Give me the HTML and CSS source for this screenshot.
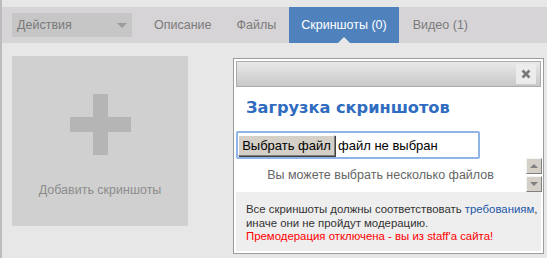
FILE: index.html
```html
<!DOCTYPE html>
<html lang="ru">
<head>
  <meta charset="UTF-8">
  <title>Скриншоты</title>
  <link rel="stylesheet" href="styles.css">
</head>
<body>
  <div id="page">
    <div class="tabbar">
      <div class="actions">Действия <span class="caret"></span></div>
      <ul class="tabs">
        <li class="tab">Описание</li>
        <li class="tab">Файлы</li>
        <li class="tab active">Скриншоты (0)</li>
        <li class="tab">Видео (1)</li>
      </ul>
    </div>

    <div class="content">
      <div class="add-card">
        <div class="plus"></div>
        <span class="add-label">Добавить скриншоты</span>
      </div>
    </div>

    <div class="dialog">
      <div class="dialog-bar">
        <span class="close">
          <svg width="10" height="10" viewBox="0 0 10 10"><path d="M1.5 1.5 L8.5 8.5 M8.5 1.5 L1.5 8.5" stroke="#7a7a7a" stroke-width="2.6"/></svg>
        </span>
      </div>
      <div class="dialog-body">
        <h2 class="dialog-title">Загрузка скриншотов</h2>
        <div class="file-field">
          <button class="file-btn">Выбрать файл</button>
          <span class="file-name">файл не выбран</span>
        </div>
        <p class="hint">Вы можете выбрать несколько файлов</p>
        <div class="notice">
          Все скриншоты должны соответствовать <a href="#">требованиям</a>,<br>
          иначе они не пройдут модерацию.<br>
          <span class="warn">Премодерация отключена - вы из staff'a сайта!</span>
        </div>
      </div>
      <div class="scroll-btns">
        <span class="sbtn up"></span>
        <span class="sbtn down"></span>
      </div>
    </div>
  </div>
</body>
</html>
```

FILE: styles.css
```css
html, body, div, ul, li, p, h2 {
  margin: 0;
  padding: 0;
}

body {
  background-color: #e7e7e7;
  font-family: "Liberation Sans", Arial, sans-serif;
  color: #444;
  height: 258px;
  overflow: hidden;
}

#page {
  position: relative;
  height: 258px;
  border-left: 2px solid #bcbcbc;
  padding-top: 7px;
  box-sizing: border-box;
}

/* top bar */

.tabbar {
  display: flex;
  align-items: stretch;
  height: 36px;
  background-color: #d6d4d6;
  padding-left: 10px;
}

.actions {
  align-self: center;
  position: relative;
  width: 120px;
  height: 24px;
  line-height: 24px;
  box-sizing: border-box;
  padding-left: 5px;
  background-color: #c6c6c6;
  color: #7a7a7a;
  font-size: 12.5px;
}

.caret {
  position: absolute;
  right: 5px;
  top: 10px;
  border-left: 5px solid transparent;
  border-right: 5px solid transparent;
  border-top: 5px solid #9c9c9c;
}

.tabs {
  display: flex;
  list-style: none;
  margin-left: 10px;
  gap: 2px;
}

.tab {
  position: relative;
  padding: 0 11px 0 12px;
  line-height: 36px;
  font-size: 12.5px;
  color: #7a7a7a;
}

.tab.active {
  padding: 0 12px;
  background-color: #4f81bd;
  color: #fff;
}

.tab.active:after {
  content: "";
  position: absolute;
  left: 50%;
  bottom: 0;
  margin-left: -6px;
  border-left: 6px solid transparent;
  border-right: 6px solid transparent;
  border-bottom: 6px solid #e7e7e7;
}

/* left content */

.content {
  padding: 13px 0 0 10px;
}

.add-card {
  display: flex;
  flex-direction: column;
  align-items: center;
  width: 176px;
  height: 170px;
  box-sizing: border-box;
  padding-top: 38px;
  background-color: #d0d0d0;
}

.plus {
  position: relative;
  width: 61px;
  height: 61px;
}

.plus:before, .plus:after {
  content: "";
  position: absolute;
  background-color: #b5b5b5;
}

.plus:before {
  left: 23px;
  top: 0;
  width: 15px;
  height: 61px;
}

.plus:after {
  left: 0;
  top: 23px;
  width: 61px;
  height: 15px;
}

.add-label {
  margin-top: 28px;
  font-size: 12.5px;
  color: #8c8c8c;
}

/* upload dialog */

.dialog {
  position: absolute;
  left: 231px;
  top: 58px;
  width: 311px;
  height: 196px;
  box-sizing: border-box;
  border: 1px solid #9c9c9c;
  padding: 2px;
  background-color: #fff;
}

.dialog-bar {
  position: relative;
  height: 26px;
  box-sizing: border-box;
  border: 1px solid #ababab;
  background: linear-gradient(#e9e9e9, #c8c8c8);
}

.close {
  position: absolute;
  right: 4px;
  top: 2px;
  width: 20px;
  height: 20px;
  display: flex;
  align-items: center;
  justify-content: center;
  background-color: #ececec;
}

.dialog-body {
  height: 164px;
}

.dialog-title {
  padding: 11px 0 0 10px;
  height: 33px;
  box-sizing: border-box;
  font-family: "DejaVu Sans", Verdana, sans-serif;
  font-size: 16.2px;
  font-weight: bold;
  color: #2f6cc0;
}

.file-field {
  display: flex;
  align-items: center;
  width: 244px;
  height: 28px;
  margin-top: 11px;
  box-sizing: border-box;
  border: 2px solid #8fb4e8;
  border-radius: 2px;
  font-size: 13px;
  color: #000;
}

.file-btn {
  height: 21px;
  width: 97px;
  padding: 0;
  margin-right: 3px;
  border: 1px solid;
  border-color: #fff #808080 #808080 #fff;
  box-shadow: 1px 1px 0 #404040;
  background-color: #d4d0c8;
  font-family: "Liberation Sans", Arial, sans-serif;
  font-size: 13px;
  color: #000;
}

.hint {
  padding: 9px 16px 0 0;
  height: 33px;
  box-sizing: border-box;
  text-align: center;
  font-size: 12.5px;
  color: #666;
}

.notice {
  height: 59px;
  box-sizing: border-box;
  padding: 11px 0 0 10px;
  background-color: #eeeeee;
  font-size: 11.4px;
  line-height: 13.5px;
  white-space: nowrap;
  color: #333;
}

.notice a {
  color: #1d57a8;
  text-decoration: none;
}

.warn {
  color: #f00;
}

.scroll-btns {
  position: absolute;
  right: 1px;
  top: 99px;
  display: flex;
  flex-direction: column;
  gap: 2px;
}

.sbtn {
  position: relative;
  width: 16px;
  height: 16px;
  box-sizing: border-box;
  border: 1px solid;
  border-color: #f4f4f4 #808080 #808080 #f4f4f4;
  background-color: #d4d0c8;
}

.sbtn:after {
  content: "";
  position: absolute;
  left: 3px;
  border-left: 4px solid transparent;
  border-right: 4px solid transparent;
}

.sbtn.up:after {
  top: 5px;
  border-bottom: 4px solid #808080;
}

.sbtn.down:after {
  top: 5px;
  border-top: 4px solid #808080;
}
```
